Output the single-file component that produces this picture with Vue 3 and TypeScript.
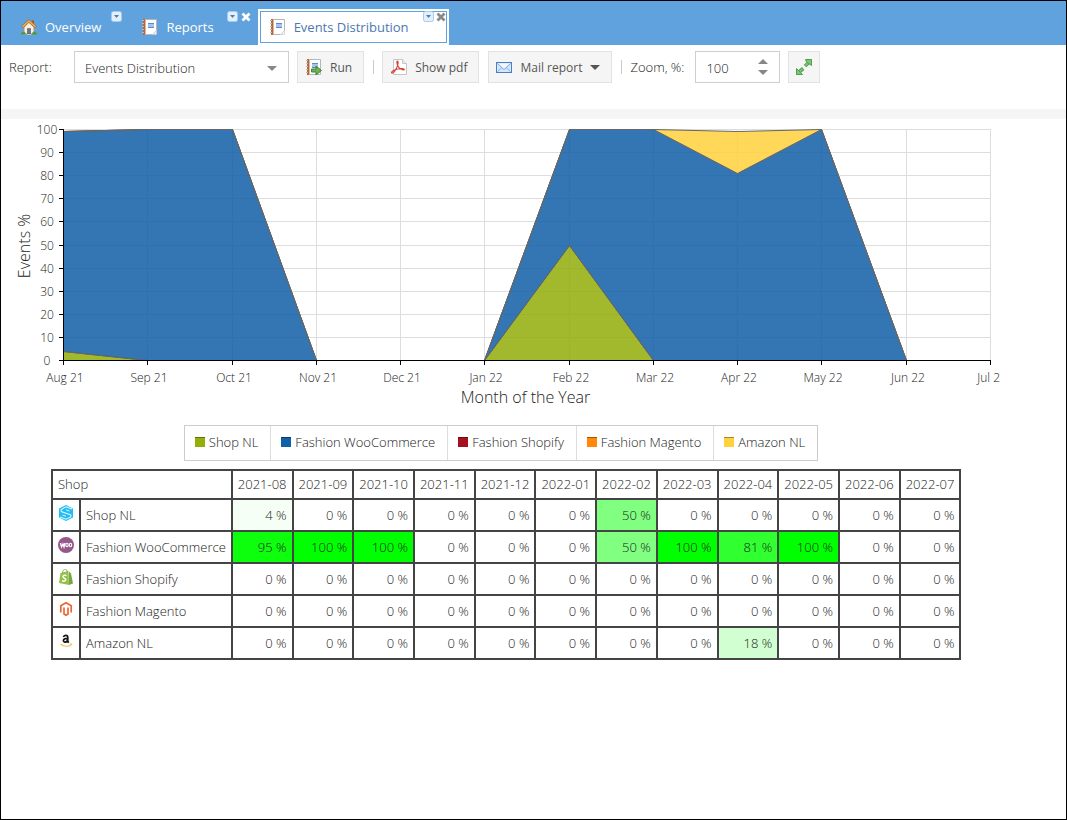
<script setup lang="ts">
import { computed, onBeforeUnmount, onMounted, ref } from 'vue'

interface Series { name: string; color: string; values: number[] }

const tabs = [
  { label: 'Overview', icon: 'home', closable: false },
  { label: 'Reports', icon: 'book', closable: true },
  { label: 'Events Distribution', icon: 'book', closable: true },
]
const activeTab = ref('Events Distribution')
const report = ref('Events Distribution')
const zoom = ref(100)

const months = ['2021-08', '2021-09', '2021-10', '2021-11', '2021-12', '2022-01', '2022-02', '2022-03', '2022-04', '2022-05', '2022-06', '2022-07']
const monthLabels = ['Aug 21', 'Sep 21', 'Oct 21', 'Nov 21', 'Dec 21', 'Jan 22', 'Feb 22', 'Mar 22', 'Apr 22', 'May 22', 'Jun 22', 'Jul 2']

const series: Series[] = [
  { name: 'Shop NL', color: '#94ae0a', values: [4, 0, 0, 0, 0, 0, 50, 0, 0, 0, 0, 0] },
  { name: 'Fashion WooCommerce', color: '#115fa6', values: [95, 100, 100, 0, 0, 0, 50, 100, 81, 100, 0, 0] },
  { name: 'Fashion Shopify', color: '#a61120', values: [0, 0, 0, 0, 0, 0, 0, 0, 0, 0, 0, 0] },
  { name: 'Fashion Magento', color: '#ff8809', values: [0, 0, 0, 0, 0, 0, 0, 0, 0, 0, 0, 0] },
  { name: 'Amazon NL', color: '#ffd13e', values: [0, 0, 0, 0, 0, 0, 0, 0, 18, 0, 0, 0] },
]

const chartBox = ref<HTMLElement | null>(null)
const chartWidth = ref(1000)
let observer: ResizeObserver | undefined
onMounted(() => {
  const el = chartBox.value
  if (!el) return
  chartWidth.value = el.clientWidth
  observer = new ResizeObserver(() => { chartWidth.value = el.clientWidth })
  observer.observe(el)
})
onBeforeUnmount(() => observer?.disconnect())

const left = 62
const top = 10
const plotHeight = 231
const bottom = top + plotHeight
const right = computed(() => chartWidth.value - 11)
const xAt = (i: number) => Math.round(left + (i * (right.value - left)) / (months.length - 1))
const yAt = (v: number) => Math.round(bottom - (v * plotHeight) / 100)
const yTicks = [0, 10, 20, 30, 40, 50, 60, 70, 80, 90, 100]

// Area vertices sit on pixel centres so that their outlines stay one pixel wide.
const point = (v: number, i: number) => `${xAt(i) + 0.5},${yAt(v) + 0.5}`

const areas = computed(() => {
  const base = months.map(() => 0)
  return series
    .map((s) => {
      const lower = base.map(point).reverse()
      s.values.forEach((v, i) => { base[i] += v })
      const upper = base.map(point)
      return { name: s.name, color: s.color, points: [...upper, ...lower].join(' '), visible: s.values.some((v) => v > 0) }
    })
    .filter((a) => a.visible)
})

const shade = (v: number) => `rgb(${Math.round(255 * (1 - v / 100))}, 255, ${Math.round(255 * (1 - v / 100))})`
</script>

<template>
  <div class="page">
    <nav class="tabs" aria-label="Open views">
      <div v-for="t in tabs" :key="t.label" class="tab" :class="{ active: t.label === activeTab, fixed: !t.closable }">
        <button class="tab-main" type="button" @click="activeTab = t.label">
          <svg v-if="t.icon === 'home'" width="16" height="16" viewBox="0 0 16 16" aria-hidden="true">
            <path d="M3 7.500 8 3l5 4.500V15H3z" fill="#f6efe2" stroke="#a89880" />
            <path d="M6.500 9.500h3V15h-3z" fill="#6b747e" stroke="#4f5862" stroke-width=".6" />
            <path d="M11 1.500h2v4h-2z" fill="#a8562b" />
            <path d="M1.200 8.200 8 2l6.800 6.200" fill="none" stroke="#a5682a" stroke-width="2.800" stroke-linejoin="round" />
            <path d="M1.500 7.800 8 2l6.500 5.800" fill="none" stroke="#e8ae55" stroke-width="1.600" />
            <path d="M0 15.500c0-3 4-4 5-.5zM11 15.500c0-4 4.500-4 5 0z" fill="#4d9c35" />
            <path d="M6 15h4v1H6z" fill="#c5c9ca" />
          </svg>
          <svg v-else width="16" height="16" viewBox="0 0 16 16" aria-hidden="true">
            <path d="M3.500.5h11v11l-4 4h-7z" fill="#fff" stroke="#b4b7ba" />
            <path d="M10.500 15.500h4v-4z" fill="#f4f5f6" stroke="#c8cbcd" stroke-width=".7" />
            <path d="M1 0h2v16H1z" fill="#b5683c" />
            <path d="M3 0h1v16H3z" fill="#dcb79e" />
            <path d="M0 1.500h2M0 4.500h2M0 7.500h2M0 10.500h2M0 13.500h2" stroke="#c9b8ac" />
            <path d="M6 4.500h6M6 8.500h6" stroke="#5b88d3" /><path d="M6 5h6v3H6z" fill="#a9c3ee" />
          </svg>
          <span>{{ t.label }}</span>
        </button>
        <button class="tab-menu" type="button" :aria-label="`${t.label} menu`">
          <svg width="11" height="11" viewBox="0 0 11 11"><rect x=".5" y=".5" width="10" height="10" rx="2" fill="#e3effb" stroke="#a7caed" /><path d="M3 4h5L5.500 7z" fill="#4581bd" /></svg>
        </button>
        <button v-if="t.closable" class="tab-close" type="button" :aria-label="`Close ${t.label}`">
          <svg width="10" height="10" viewBox="0 0 10 10"><path d="M1.500 1.500l7 7M8.500 1.500l-7 7" stroke="currentColor" stroke-width="2.800" /></svg>
        </button>
      </div>
    </nav>

    <div class="toolbar">
      <label for="report" class="report-label">Report:</label>
      <div class="combo">
        <select id="report" v-model="report"><option>Events Distribution</option></select>
        <svg width="10" height="5" viewBox="0 0 10 5" aria-hidden="true"><path d="M0 0h10L5 5z" fill="#878787" /></svg>
      </div>
      <button type="button" class="btn run">
        <svg width="16" height="16" viewBox="0 0 16 16" aria-hidden="true">
          <path d="M3.500.5h11v15h-11z" fill="#fff" stroke="#b4b7ba" />
          <path d="M1 0h2v16H1z" fill="#b5683c" />
          <path d="M3 0h1v16H3z" fill="#dcb79e" />
          <path d="M0 1.500h2M0 4.500h2M0 7.500h2M0 10.500h2M0 13.500h2" stroke="#c9b8ac" />
          <path d="M6 4.500h6M6 8.500h6" stroke="#5b88d3" /><path d="M6 5h6v3H6z" fill="#a9c3ee" />
          <path d="M5.500 10H10V7l5.500 4.500L10 16v-3H5.500z" fill="#6cb54c" stroke="#34792a" stroke-width=".9" />
        </svg>
        <span>Run</span>
      </button>
      <i class="sep"></i>
      <button type="button" class="btn pdf">
        <svg width="16" height="16" viewBox="0 0 16 16" aria-hidden="true">
          <path d="M2.500.5h9l4 4v11h-13z" fill="#fff" stroke="#c6c6c6" /><path d="M11.500.5v4h4" fill="#eee" stroke="#c6c6c6" />
          <path d="M6.300 2.200c1.500 0 .6 4-.5 6.300-1.500 3.100-3.600 6-5 5.500-1.300-.6 2-3.500 6-4 3.300-.6 6.500-.6 6.500.4 0 1.500-4.500-.2-6-2.600C6.200 6 5.400 2.200 6.300 2.200z" fill="none" stroke="#d8403a" stroke-width="1.200" />
        </svg>
        <span>Show pdf</span>
      </button>
      <button type="button" class="btn mail">
        <svg width="16" height="11" viewBox="0 0 16 11" aria-hidden="true">
          <rect x=".5" y=".5" width="15" height="10" fill="#d5e6fa" stroke="#4a7fc6" />
          <path d="M1.500 9.500 6 5.500M14.500 9.500 10 5.500" stroke="#8fb3e2" /><path d="M1.500 1.500l6.500 6 6.500-6" fill="#f2f8ff" stroke="#7ba5dc" />
        </svg>
        <span>Mail report</span>
        <svg class="caret" width="10" height="5" viewBox="0 0 10 5" aria-hidden="true"><path d="M0 0h10L5 5z" fill="#555" /></svg>
      </button>
      <i class="sep"></i>
      <label for="zoom" class="zoom-label">Zoom, %:</label>
      <div class="spinner">
        <input id="zoom" v-model.number="zoom" type="number">
        <div class="steps">
          <button type="button" aria-label="Increase zoom" @click="zoom++"><svg width="10" height="5" viewBox="0 0 10 5"><path d="M0 5h10L5 0z" fill="#878787" /></svg></button>
          <button type="button" aria-label="Decrease zoom" @click="zoom--"><svg width="10" height="5" viewBox="0 0 10 5"><path d="M0 0h10L5 5z" fill="#878787" /></svg></button>
        </div>
      </div>
      <button type="button" class="btn expand" aria-label="Fit to window">
        <svg width="16" height="16" viewBox="0 0 16 16" aria-hidden="true">
          <path d="M3 13 7.200 9.500M9 7l4-3.500" stroke="#4f9e4d" stroke-width="3.600" /><path d="M3 13l3.700-3.100M9.500 6.600l3.500-3.100" stroke="#7cc576" stroke-width="1.800" />
          <path d="M9.500.5h6v6l-2-1.500-3-2zM.5 9.500v6h6l-2-2-2-2z" fill="#7cc576" stroke="#4f9e4d" />
        </svg>
      </button>
    </div>

    <main class="report">
      <div ref="chartBox" class="chart">
        <svg width="100%" height="290" role="img" aria-label="Events % by month of the year">
          <g class="grid">
            <line v-for="v in yTicks" :key="'h' + v" :x1="left" :x2="right" :y1="yAt(v)" :y2="yAt(v)" />
            <line v-for="(m, i) in months" :key="m" :x1="xAt(i)" :x2="xAt(i)" :y1="top" :y2="bottom" />
          </g>
          <polygon v-for="a in areas" :key="a.name" :points="a.points" :fill="a.color" class="area" />
          <g class="axis">
            <line :x1="left" :x2="left" :y1="top" :y2="bottom" />
            <line :x1="left" :x2="right" :y1="bottom" :y2="bottom" />
            <line v-for="v in yTicks" :key="'y' + v" :x1="left - 4" :x2="left" :y1="yAt(v)" :y2="yAt(v)" />
            <line v-for="(m, i) in months" :key="'x' + m" :x1="xAt(i)" :x2="xAt(i)" :y1="bottom" :y2="bottom + 5" />
          </g>
          <g class="labels">
            <text v-for="v in yTicks" :key="'t' + v" :x="46" :y="yAt(v) + 5" text-anchor="middle">{{ v }}</text>
            <text v-for="(m, i) in monthLabels" :key="m" :x="i === 11 ? xAt(i) + 10 : xAt(i) + 2" :y="bottom + 22" :text-anchor="i === 11 ? 'end' : 'middle'">{{ m }}</text>
          </g>
          <text class="title" :x="(left + right) / 2 - 1" y="284" text-anchor="middle">Month of the Year</text>
          <text class="title" text-anchor="middle" transform="translate(29 127) rotate(-90)">Events %</text>
        </svg>
        <ul class="legend">
          <li v-for="s in series" :key="s.name"><i :style="{ background: s.color }"></i>{{ s.name }}</li>
        </ul>
      </div>

      <table>
        <thead>
          <tr><th colspan="2" class="name" scope="col">Shop</th><th v-for="m in months" :key="m" scope="col">{{ m }}</th></tr>
        </thead>
        <tbody>
          <tr v-for="(s, n) in series" :key="s.name">
            <td class="logo">
              <svg width="16" height="16" viewBox="0 0 16 16" aria-hidden="true">
                <template v-if="n === 0">
                  <path d="M8 0l7 3.500v9L8 16l-7-3.500v-9z" fill="#1fbcf5" />
                  <path d="M14 4 8 1.800 3.200 4.500v2L12.800 10v2L8 14.200 2 12" fill="none" stroke="#e4f7fe" stroke-width="1.100" />
                  <path d="M11.500 6 8 4.800M4.500 10 8 11.300" stroke="#e4f7fe" />
                </template>
                <template v-else-if="n === 1">
                  <circle cx="8" cy="8" r="8" fill="#96588a" />
                  <path d="M2.500 6l1 4L5 7l1 3 1-4" fill="none" stroke="#fff" stroke-width="1.300" />
                  <ellipse cx="9" cy="8" rx="1.200" ry="1.700" fill="none" stroke="#fff" stroke-width="1.100" /><ellipse cx="12.500" cy="8" rx="1.200" ry="1.700" fill="none" stroke="#fff" stroke-width="1.100" />
                </template>
                <template v-else-if="n === 2">
                  <path d="M2.500 4 10.500 2l.5 14-10-2z" fill="#95bf47" /><path d="M11 2.500 13 4.500l2 10L11 16z" fill="#76a544" />
                  <path d="M4.500 4.500c0-5 4.500-6 5-1" fill="none" stroke="#86b045" />
                  <path d="M8.500 6.500C4.500 5.500 4 8 6.500 9.200S7.500 13 4 11.800" fill="none" stroke="#fff" stroke-width="1.500" />
                </template>
                <template v-else-if="n === 3">
                  <path d="M2.800 11.500V4.800L8 1.700l5.200 3.100v6.700M6 6.500v6.500l2 1.300 2-1.300V6.500" fill="none" stroke="#ec6737" stroke-width="1.700" />
                </template>
                <template v-else>
                  <path d="M5.500 4.200c.4-2.500 4.300-2.500 4.300.2v4l1 1.200M9.500 5.300C4 5.300 5 9.200 7 9.200c2 0 2.600-1.500 2.600-3" fill="none" stroke="#151515" stroke-width="1.700" />
                  <path d="M2.500 11c3 3 8 3 11 .5" fill="none" stroke="#f8bd65" stroke-width="1.100" /><path d="M12 10.800h2l-.5 1.500" fill="none" stroke="#f8bd65" stroke-width=".8" />
                </template>
              </svg>
            </td>
            <th class="name" scope="row">{{ s.name }}</th>
            <td v-for="(v, i) in s.values" :key="months[i]" :style="{ background: shade(v) }">{{ v }} %</td>
          </tr>
        </tbody>
      </table>
    </main>
  </div>
</template>

<style>
body { margin: 0; background: #fff; }
</style>

<style scoped>
.page { box-sizing: border-box; min-height: 100vh; border: 1px solid #000; background: #fff; color: #222; font: 300 13px/17px "Open Sans", sans-serif; }
button, select, input { font: inherit; color: inherit; margin: 0; padding: 0; border: 0; background: none; border-radius: 0; }
button { cursor: pointer; }
svg { display: block; flex: none; }

.tabs { display: flex; gap: 4px; padding: 8px 8px 0; background: #5fa2dd; }
.tab { position: relative; height: 36px; color: #fff; }
.tab-main { display: flex; align-items: center; gap: 8px; height: 36px; padding: 0 40px 0 12px; font-weight: 400; white-space: nowrap; }
.fixed .tab-main { padding-right: 25px; }
.active { background: #fff; color: #4b79af; }
.active .tab-main { border: 1px solid #5fa2dd; height: 32px; margin: 2px; padding: 0 37px 0 9px; }
.tab-menu { position: absolute; top: 2px; right: 16px; }
.active .tab-menu { right: 15px; }
.fixed .tab-menu { right: 4px; }
.tab-close { position: absolute; top: 3px; right: 3px; }
.active .tab-close { color: #8a8a8a; }

.toolbar { display: flex; align-items: flex-start; padding: 6px 8px 26px; border-bottom: 10px solid #f5f5f5; white-space: nowrap; }
.report-label { width: 65px; line-height: 32px; }
.combo { position: relative; width: 215px; height: 32px; box-sizing: border-box; border: 1px solid #cfcfcf; margin-right: 8px; }
.combo select { width: 100%; height: 30px; padding: 2px 30px 0 10px; appearance: none; outline: 0; }
.combo svg { position: absolute; right: 11px; top: 14px; pointer-events: none; }
.btn { display: flex; align-items: center; gap: 8px; height: 32px; box-sizing: border-box; padding: 0 11px 0 8px; background: #f5f5f5; border: 1px solid #e2e2e2; color: #555; font-size: 12px; font-weight: 400; }
.sep { width: 1px; height: 14px; margin: 9px 8px 0 9px; background: #ccc; }
.mail { margin-left: 9px; padding-left: 7px; }
.zoom-label { width: 65px; line-height: 32px; }
.spinner { display: flex; box-sizing: border-box; width: 85px; height: 32px; border: 1px solid #cfcfcf; margin-right: 8px; }
.spinner input { flex: 1; min-width: 0; padding: 2px 0 0 10px; appearance: textfield; outline: 0; }
.spinner input::-webkit-inner-spin-button { appearance: none; margin: 0; }
.steps { display: flex; flex-direction: column; justify-content: center; gap: 6px; margin-right: 11px; }
.expand { padding: 0 7px; }

.report { padding-bottom: 20px; }
.chart { margin-right: 65px; }
.chart > svg { overflow: hidden; }
.grid line { stroke: #ddd; shape-rendering: crispEdges; }
.area { fill-opacity: .86; stroke: #666; }
.axis line { stroke: #000; shape-rendering: crispEdges; }
.labels text { font-size: 12px; fill: #222; }
.title { font-size: 16px; fill: #222; }

.legend { display: flex; width: max-content; margin: 16px auto 8px; padding: 0; list-style: none; border: 1px solid #ccc; }
.legend li { display: flex; align-items: center; gap: 4px; box-sizing: border-box; height: 34px; padding: 0 12px 2px 10px; }
.legend li + li { border-left: 1px solid #ddd; }
.legend i { width: 10px; height: 10px; box-sizing: border-box; border-top: 1px solid rgba(0, 0, 0, .35); }

table { border-collapse: collapse; margin-left: 50px; white-space: nowrap; }
th, td { border: 2px solid #444; padding: 0 5px; font-weight: 300; text-align: right; height: 30px; }
thead th { height: 27px; }
.name { text-align: left; }
.logo svg { margin-bottom: 4px; }
</style>
